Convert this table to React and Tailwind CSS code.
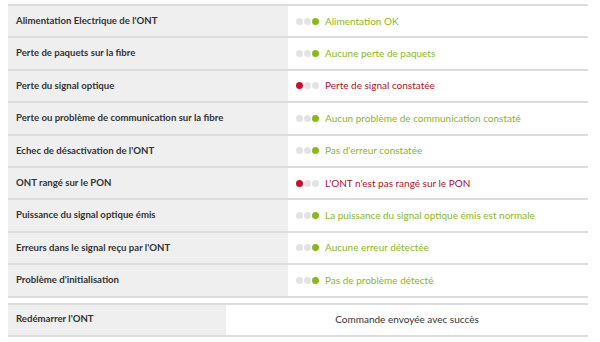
const rows = [
  { label: "Alimentation Electrique de l'ONT", ok: true, text: 'Alimentation OK' },
  { label: 'Perte de paquets sur la fibre', ok: true, text: 'Aucune perte de paquets' },
  { label: 'Perte du signal optique', ok: false, text: 'Perte de signal constatée' },
  { label: 'Perte ou problème de communication sur la fibre', ok: true, text: 'Aucun problème de communication constaté' },
  { label: "Echec de désactivation de l'ONT", ok: true, text: "Pas d'erreur constatée" },
  { label: 'ONT rangé sur le PON', ok: false, text: "L'ONT n'est pas rangé sur le PON" },
  { label: 'Puissance du signal optique émis', ok: true, text: 'La puissance du signal optique émis est normale' },
  { label: "Erreurs dans le signal reçu par l'ONT", ok: true, text: 'Aucune erreur détectée' },
  { label: "Problème d'initialisation", ok: true, text: 'Pas de problème détecté' },
];

function Lights({ ok }) {
  return (
    <div className="flex items-center gap-px shrink-0">
      <span className={`w-[7px] h-[7px] rounded-full ${ok ? 'bg-[#e3e3e3]' : 'bg-[#c8102e]'}`} />
      <span className="w-[7px] h-[7px] rounded-full bg-[#e3e3e3]" />
      <span className={`w-[7px] h-[7px] rounded-full ${ok ? 'bg-[#8cb61e]' : 'bg-[#e3e3e3]'}`} />
    </div>
  );
}

export default function App() {
  return (
    <div className="w-[600px] h-[342px] bg-white pt-[4px] pl-[8px] font-['Lato',sans-serif]">
      <div className="w-[580px] border-t-2 border-[#dcdcdc]">
        {rows.map((r) => (
          <div key={r.label} className="flex h-[32.4px] border-b-2 border-[#dcdcdc]">
            <div className="w-[280px] bg-[#efefef] flex items-center pl-[8px] text-[9.6px] font-bold text-[#333]">
              {r.label}
            </div>
            <div className="flex-1 flex items-center gap-[6px] pl-[8px]">
              <Lights ok={r.ok} />
              <span className={`text-[10px] ${r.ok ? 'text-[#8cb61e]' : 'text-[#ab1429]'}`}>{r.text}</span>
            </div>
          </div>
        ))}
      </div>
      <div className="w-[580px] mt-[5px] border-t-2 border-b-2 border-[#dcdcdc] flex h-[34px]">
        <div className="w-[218px] bg-[#efefef] flex items-center pl-[8px] text-[9.6px] font-bold text-[#333]">
          Redémarrer l'ONT
        </div>
        <div className="flex-1 flex items-center justify-center text-[10px] text-[#333]">
          Commande envoyée avec succès
        </div>
      </div>
    </div>
  );
}
